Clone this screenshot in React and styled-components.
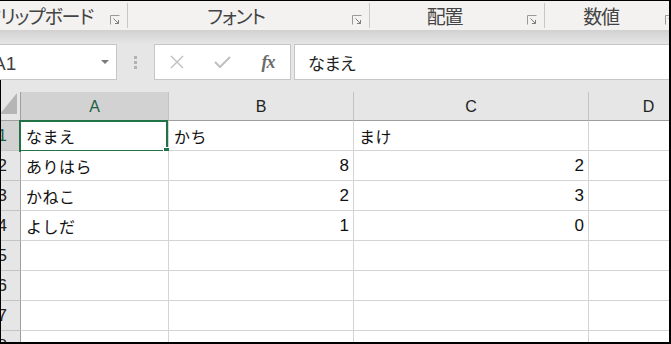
import React from "react";
import styled, { createGlobalStyle } from "styled-components";

const GlobalStyle = createGlobalStyle`
  html, body {
    margin: 0;
    padding: 0;
    background: #fff;
  }
  body {
    overflow: hidden;
    font-family: "Noto Sans CJK JP", "Noto Sans", sans-serif;
  }
`;

const ribbonGroups = [
  { id: 1, label: "クリップボード", width: 167, offset: -40, end: true },
  { id: 2, label: "フォント", width: 241 },
  { id: 3, label: "配置", width: 174 },
  { id: 4, label: "数値", width: 137 },
];

const columns = [
  { id: "A", width: 148 },
  { id: "B", width: 185 },
  { id: "C", width: 235 },
  { id: "D", width: 120 },
];

const rows = [
  ["なまえ", "かち", "まけ"],
  ["ありはら", 8, 2],
  ["かねこ", 2, 3],
  ["よしだ", 1, 0],
  [],
  [],
  [],
  [],
];

function Launcher() {
  return (
    <LauncherIcon width="10" height="10" viewBox="0 0 10 10">
      <path d="M0.5 9.5 V0.5 H9.5" stroke="#9a9a9a" fill="none" />
      <path d="M3.5 3.5 L8.5 8.5 M8.5 5 V8.5 H5" stroke="#7d7d7d" fill="none" />
    </LauncherIcon>
  );
}

function App() {
  return (
    <Frame>
      <GlobalStyle />
      <Ribbon>
        {ribbonGroups.map((g) => (
          <React.Fragment key={g.id}>
            <Group $width={g.width} $offset={g.offset || 0}>
              <GroupLabel $end={g.end}>{g.label}</GroupLabel>
              <LauncherBox>
                <Launcher />
              </LauncherBox>
            </Group>
            <Separator />
          </React.Fragment>
        ))}
      </Ribbon>

      <FormulaBar>
        <NameBox>
          <NameText>A1</NameText>
          <DropArrow />
        </NameBox>
        <Grip>
          <span />
          <span />
          <span />
        </Grip>
        <ActionBox>
          <Action>
            <svg width="14" height="14" viewBox="0 0 14 14">
              <path d="M1 1 L13 13 M13 1 L1 13" stroke="#bfbfbf" strokeWidth="1.4" fill="none" />
            </svg>
          </Action>
          <Action>
            <svg width="17" height="12" viewBox="0 0 17 12">
              <path d="M1 6 L6 11 L16 1" stroke="#bfbfbf" strokeWidth="2" fill="none" />
            </svg>
          </Action>
          <Action>
            <Fx>fx</Fx>
          </Action>
        </ActionBox>
        <FormulaInput>なまえ</FormulaInput>
      </FormulaBar>

      <Sheet>
        <Grid>
          <Corner>
            <CornerTriangle />
          </Corner>
          {columns.map((c) => (
            <ColHeader key={c.id} $active={c.id === "A"}>
              {c.id}
            </ColHeader>
          ))}
          {rows.map((r, i) => (
            <React.Fragment key={i}>
              <RowHeader $active={i === 0}>
                <span>{i + 1}</span>
              </RowHeader>
              {columns.map((c, j) => {
                const v = r[j];
                const isNum = typeof v === "number";
                return (
                  <Cell key={c.id} $num={isNum}>
                    {v}
                    {i === 0 && j === 0 && (
                      <Selection>
                        <Handle />
                      </Selection>
                    )}
                  </Cell>
                );
              })}
            </React.Fragment>
          ))}
        </Grid>
      </Sheet>
    </Frame>
  );
}

export default App;

const Frame = styled.div`
  width: 671px;
  height: 344px;
  box-sizing: border-box;
  border-top: 1px solid #000;
  border-right: 2px solid #000;
  border-bottom: 2px solid #000;
  overflow: hidden;
  background: #e6e6e6;
  display: flex;
  flex-direction: column;
`;

const Ribbon = styled.div`
  height: 29px;
  flex: none;
  display: flex;
  align-items: center;
  background: #f3f2f1;
`;

const Group = styled.div`
  flex: none;
  width: ${(p) => p.$width}px;
  margin-left: ${(p) => p.$offset}px;
  height: 100%;
  display: flex;
  align-items: center;
`;

const GroupLabel = styled.div`
  flex: 1;
  display: flex;
  justify-content: ${(p) => (p.$end ? "flex-end" : "center")};
  padding-right: ${(p) => (p.$end ? "9px" : "0")};
  white-space: nowrap;
  font-size: 19px;
  line-height: 29px;
  letter-spacing: -1.2px;
  color: #444;
  font-feature-settings: "palt";
`;

const LauncherBox = styled.div`
  flex: none;
  width: 25px;
  height: 100%;
  display: flex;
  align-items: center;
  padding-left: 8px;
  padding-top: 8px;
  box-sizing: border-box;
`;

const LauncherIcon = styled.svg`
  display: block;
`;

const Separator = styled.div`
  flex: none;
  width: 1px;
  height: 25px;
  background: #c8c8c8;
`;

const FormulaBar = styled.div`
  flex: none;
  height: 50px;
  box-sizing: border-box;
  padding-top: 14px;
  display: flex;
  align-items: stretch;
  background: linear-gradient(#d1d1d1 0px, #e0e0e0 10px, #e6e6e6 14px);
`;

const NameBox = styled.div`
  flex: none;
  width: 125px;
  margin-left: -8px;
  box-sizing: border-box;
  border: 1px solid #c6c6c6;
  background: #fff;
  display: flex;
  align-items: center;
  padding-left: 0;
  padding-right: 7px;
`;

const NameText = styled.div`
  flex: 1;
  font-family: "Liberation Sans", Arial, sans-serif;
  font-size: 19px;
  color: #3f3f3f;
  padding-top: 3px;
`;

const DropArrow = styled.div`
  width: 0;
  height: 0;
  border-left: 4px solid transparent;
  border-right: 4px solid transparent;
  border-top: 4px solid #7a7a7a;
`;

const Grip = styled.div`
  flex: none;
  width: 37px;
  display: flex;
  flex-direction: column;
  align-items: center;
  justify-content: center;
  gap: 2px;
  span {
    display: block;
    width: 3px;
    height: 3px;
    background: #b3b3b3;
  }
`;

const ActionBox = styled.div`
  flex: none;
  width: 137px;
  box-sizing: border-box;
  border: 1px solid #c6c6c6;
  background: #fff;
  display: grid;
  grid-template-columns: 44px 46px 46px;
  align-items: center;
`;

const Action = styled.div`
  display: flex;
  justify-content: center;
  align-items: center;
  svg {
    display: block;
  }
`;

const Fx = styled.span`
  font-family: "Liberation Serif", "DejaVu Serif", serif;
  font-style: italic;
  font-weight: bold;
  font-size: 18px;
  color: #6b6b6b;
  letter-spacing: -1px;
`;

const FormulaInput = styled.div`
  flex: 1;
  margin-left: 3px;
  margin-right: -10px;
  box-sizing: border-box;
  border: 1px solid #c6c6c6;
  background: #fff;
  display: flex;
  align-items: center;
  padding-left: 13px;
  font-size: 17px;
  color: #222;
  font-feature-settings: "palt";
`;

const Sheet = styled.div`
  flex: 1;
  padding-top: 12px;
  border-left: 1px solid #000;
  overflow: hidden;
`;

const Grid = styled.div`
  display: grid;
  grid-template-columns: 20px ${columns.map((c) => c.width + "px").join(" ")};
  grid-template-rows: 29px;
  grid-auto-rows: 30px;
`;

const Corner = styled.div`
  position: relative;
  background: #e6e6e6;
  border-right: 1px solid #9f9f9f;
  border-bottom: 1px solid #9f9f9f;
`;

const CornerTriangle = styled.div`
  position: absolute;
  right: 3px;
  bottom: 6px;
  width: 17px;
  height: 21px;
  background: #b5b5b5;
  clip-path: polygon(100% 0, 100% 100%, 0 100%);
`;

const ColHeader = styled.div`
  display: flex;
  align-items: center;
  justify-content: center;
  background: ${(p) => (p.$active ? "#d2d2d2" : "#e6e6e6")};
  border-right: 1px solid #c4c4c4;
  border-bottom: 1px solid #9f9f9f;
  font-family: "Liberation Sans", Arial, sans-serif;
  font-size: 16px;
  color: ${(p) => (p.$active ? "#1f5e44" : "#222")};
  padding-top: 2px;
`;

const RowHeader = styled.div`
  display: flex;
  justify-content: flex-end;
  align-items: center;
  overflow: hidden;
  padding-right: 13px;
  background: ${(p) => (p.$active ? "#d2d2d2" : "#e6e6e6")};
  border-right: 1px solid #9f9f9f;
  border-bottom: 1px solid #c4c4c4;
  font-family: "Liberation Sans", Arial, sans-serif;
  font-size: 17px;
  color: ${(p) => (p.$active ? "#1f5e44" : "#222")};
  span {
    flex: none;
  }
`;

const Cell = styled.div`
  position: relative;
  background: #fff;
  border-right: 1px solid #d4d4d4;
  border-bottom: 1px solid #d4d4d4;
  display: flex;
  align-items: center;
  justify-content: ${(p) => (p.$num ? "flex-end" : "flex-start")};
  padding: ${(p) => (p.$num ? "0 4px 0 0" : "0 0 0 5px")};
  font-family: ${(p) =>
    p.$num
      ? `"Liberation Sans", Arial, sans-serif`
      : `"Noto Sans CJK JP", "Noto Sans", sans-serif`};
  font-size: ${(p) => (p.$num ? "17px" : "16px")};
  letter-spacing: ${(p) => (p.$num ? "0" : "0.5px")};
  color: #111;
  white-space: nowrap;
`;

const Selection = styled.div`
  position: absolute;
  top: -1px;
  left: -2px;
  width: 149px;
  height: 32px;
  box-sizing: border-box;
  border: 2px solid #217346;
  pointer-events: none;
`;

const Handle = styled.div`
  position: absolute;
  right: -5px;
  bottom: -5px;
  width: 6px;
  height: 6px;
  background: #217346;
  border: 1px solid #fff;
`;
